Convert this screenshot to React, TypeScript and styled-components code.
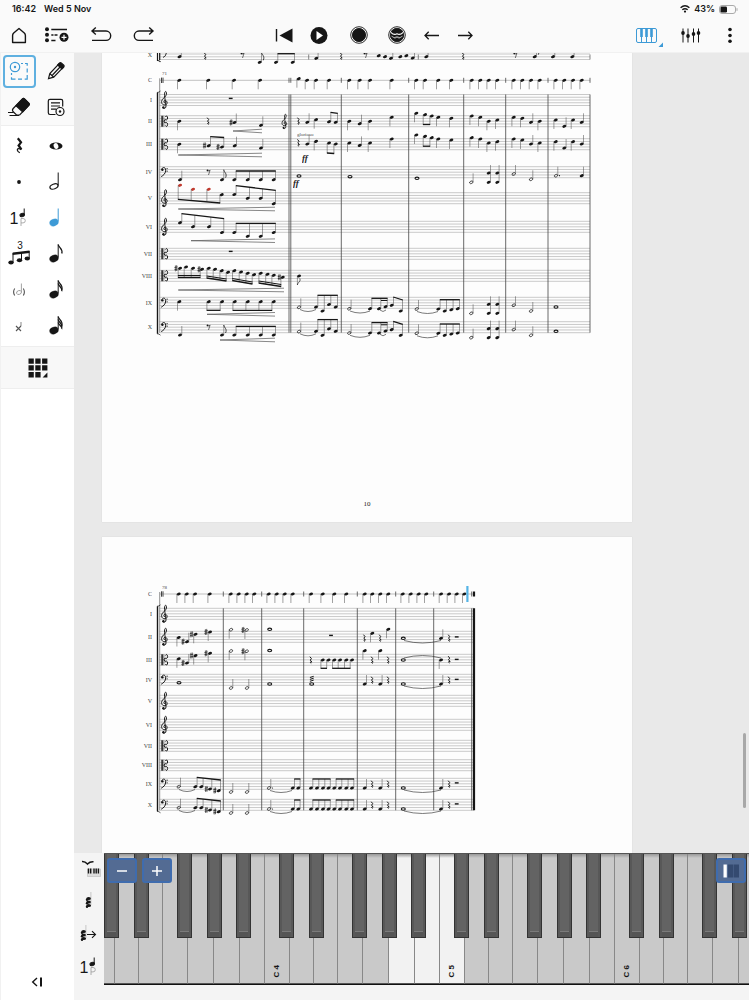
import React from "react";
import styled, { createGlobalStyle } from "styled-components";

const INK = "#161616";
const BLUE = "#3d9ad6";

const GlobalStyle = createGlobalStyle`
  * { box-sizing: border-box; }
  html, body, #root { height: 100%; }
  body { margin: 0; background: #fafafa; color: ${INK}; font-family: Inter, "Liberation Sans", sans-serif; }
  button { font: inherit; color: inherit; border: 0; padding: 0; background: none; }
`;

const Shell = styled.div`
  height: 100vh;
  display: flex;
  flex-direction: column;
  overflow: hidden;
`;

/* ---------- header ---------- */

const StatusBar = styled.div`
  height: 18px;
  flex: none;
  display: flex;
  align-items: center;
  justify-content: space-between;
  padding: 0 11px 0 12px;
  font-size: 9px;
  line-height: 16px;
  font-weight: 600;
`;

const StatusGroup = styled.div<{ $gap: number }>`
  display: flex;
  align-items: center;
  gap: ${(p) => p.$gap}px;
`;

const Toolbar = styled.header`
  height: 35px;
  flex: none;
  display: grid;
  grid-template-columns: 1fr auto 1fr;
  align-items: center;
  border-bottom: 1px solid #f1f1f1;
`;

const ToolGroup = styled.div<{ $gap: number; $end?: boolean }>`
  display: flex;
  align-items: center;
  gap: ${(p) => p.$gap}px;
  ${(p) => (p.$end ? "justify-content: flex-end; padding-right: 9px;" : "")}
`;

const LeftTools = styled(ToolGroup)`
  padding-left: 4px;
`;

const IconButton = styled.button<{ $w?: number }>`
  width: ${(p) => p.$w ?? 30}px;
  height: 30px;
  display: flex;
  align-items: center;
  justify-content: center;
  svg { flex: none; display: block; overflow: visible; }
`;

/* ---------- body ---------- */

const Body = styled.div`
  flex: 1;
  min-height: 0;
  display: flex;
`;

const Sidebar = styled.aside`
  width: 74px;
  flex: none;
  display: flex;
  flex-direction: column;
  background: #fff;
  border-left: 1px solid #f1f1f1;
`;

const Palette = styled.div<{ $tinted?: boolean }>`
  display: grid;
  grid-template-columns: 1fr 1fr;
  grid-auto-rows: 36px;
  justify-items: center;
  align-items: center;
  padding: ${(p) => (p.$tinted ? "0" : "2px 0")};
  background: ${(p) => (p.$tinted ? "#fafafa" : "#fff")};
  border-bottom: 1px solid #eee;
`;

const PaletteButton = styled.button<{ $active?: boolean }>`
  width: 33px;
  height: 33px;
  display: flex;
  align-items: center;
  justify-content: center;
  border-radius: 4px;
  border: 2px solid ${(p) => (p.$active ? "#5fb0e0" : "transparent")};
  svg { flex: none; display: block; overflow: visible; }
`;

const GridRow = styled.div`
  height: 42px;
  display: flex;
  align-items: center;
  justify-content: center;
  background: #f8f8f8;
  border-bottom: 1px solid #eee;
`;

const SidebarFoot = styled.div`
  margin-top: auto;
  height: 33px;
  display: flex;
  justify-content: center;
`;

const Main = styled.main`
  flex: 1;
  min-width: 0;
  display: flex;
  flex-direction: column;
`;

const ScoreView = styled.section`
  position: relative;
  flex: 1;
  min-height: 0;
  overflow: hidden;
  display: flex;
  flex-direction: column;
  gap: 15px;
  padding-left: 28px;
  background: #e9e9e9;
`;

const Sheet = styled.article`
  flex: none;
  width: 100%;
  max-width: 530px;
  background: #fdfdfd;
  box-shadow: 0 0 1px #ccc;
  svg { display: block; width: 100%; height: auto; }
`;

const Folio = styled.p`
  margin: 0;
  padding-bottom: 13px;
  text-align: center;
  font: 7px/10px "Liberation Serif", serif;
  color: #222;
`;

const ScrollThumb = styled.div`
  position: absolute;
  right: 3px;
  bottom: 45px;
  width: 3px;
  height: 75px;
  border-radius: 2px;
  background: #a8a8a8;
`;

/* ---------- keyboard ---------- */

const PianoPanel = styled.section`
  flex: none;
  height: 147px;
  display: flex;
  background: #f4f4f4;
`;

const PianoTools = styled.div`
  width: 30px;
  flex: none;
  display: flex;
  flex-direction: column;
  gap: 3px;
`;

const KeyboardFrame = styled.div`
  position: relative;
  flex: 1;
  min-width: 0;
  height: 132px;
  overflow: hidden;
  display: flex;
  border-top: 1px solid #555;
  border-bottom: 1px solid #111;
`;

const Octave = styled.div`
  position: relative;
  flex: none;
  display: grid;
  grid-template-columns: 25px 24px 24px 25px 26px 26px 25px;
  &:first-child { margin-left: -14px; }
`;

const WhiteKey = styled.button<{ $lit: boolean }>`
  display: flex;
  align-items: flex-end;
  justify-content: center;
  padding-bottom: 6px;
  background: linear-gradient(#999, ${(p) => (p.$lit ? "#f2f2f2" : "#c9c9c9")} 4px);
  border-right: 1px solid #888;
  border-bottom: 1px solid #555;
  font: bold 8px/10px "Liberation Sans", sans-serif;
`;

const KeyName = styled.span`
  writing-mode: vertical-rl;
  transform: rotate(180deg);
`;

const BlackKey = styled.button<{ $x: number }>`
  position: absolute;
  top: 0;
  left: ${(p) => p.$x}px;
  width: 15px;
  height: 84px;
  background: #636363;
  border: 1px solid #333;
  border-top: 0;
  box-shadow: inset 2px 0 #585858, inset -2px 0 #585858, inset 0 -5px #555, inset 0 -6px #7b7b7b;
`;

const OverlayButton = styled.button<{ $side: "left" | "right"; $offset: number }>`
  position: absolute;
  top: 4px;
  ${(p) => p.$side}: ${(p) => p.$offset}px;
  width: 30px;
  height: 25px;
  display: flex;
  align-items: center;
  justify-content: center;
  border-radius: 3px;
  border: 2px solid #3f6cae;
  background: #536b93;
`;

/* ---------- music notation ---------- */

function Treble({ x, y, s = 1 }: { x: number; y: number; s?: number }) {
  return (
    <g transform={`translate(${x} ${y}) scale(${s})`}>
      <path d="M.9 3C-.9 3-1.2.9.4.5C3 .2 3.6 4.6.6 5C-3.6 5.2-3.8.6-1.2-1.6C.8-3.4 2.4-5 1.9-7.4C1.6-9.4.3-8.4.1-6.8C-.3-4.8 1 2 1.5 5.8C1.9 8.4-.8 9-1.8 7.8" fill="none" stroke={INK} strokeWidth="1" />
      <circle cx="-1.1" cy="7.4" r="1.2" fill={INK} />
    </g>
  );
}

function Alto({ x, y }: { x: number; y: number }) {
  return (
    <g transform={`translate(${x} ${y})`} fill="none" stroke={INK}>
      <path d="M-2.4-5.5V5.5" strokeWidth="1.5" />
      <path d="M-.7-5.5V5.5" strokeWidth=".5" />
      <path d="M.7-4.2C1.6-5.8 3.2-5.4 3.1-3.2C3-.9 1.2-1 .5-1.8L-.5 0L.5 1.8C1.2 1 3 .9 3.1 3.2C3.2 5.4 1.6 5.8.7 4.2" strokeWidth="1" />
    </g>
  );
}

function Bass({ x, y }: { x: number; y: number }) {
  return (
    <g transform={`translate(${x} ${y})`} fill={INK}>
      <path d="M-2.2-2.4C-2.2-5.4 1.7-5.6 1.7-2C1.7 1.4-.8 3.4-2.8 4.4" fill="none" stroke={INK} strokeWidth="1" />
      <circle cx="-1.6" cy="-2.4" r="1.2" />
      <circle cx="3.1" cy="-3.6" r=".6" />
      <circle cx="3.1" cy="-1" r=".6" />
    </g>
  );
}

const HEAD = { rx: 2.1, ry: 1.4 };
const UP = 10;

function Head({ x, y, fill = INK }: { x: number; y: number; fill?: string }) {
  return <ellipse cx={x} cy={y} {...HEAD} fill={fill} transform={`rotate(-22 ${x} ${y})`} />;
}

/*
 * A staff is written as space separated tokens: a letter and comma separated numbers.
 * u/d quarter, stem up or down   h/H half, stem up or down   w whole   n bare head
 * f/F flagged eighth up or down  r/e/b quarter, eighth, bar rest   s sharp   k dot   c chord
 * M/D single or double beam (beam y1, y2, then heads)   R red heads on a beam
 * T tie (x1, x2, y, bow)   P hairpin (x1, x2, y)   z tremolo   | bar tick (x, y)
 */
function Mark({ token }: { token: string }) {
  const kind = token[0];
  const v = token.slice(1).split(",").map(Number);
  const [x, y] = v;
  const stem = (sx: number, a: number, b: number) => (
    <path d={`M${sx} ${a}V${b}`} stroke="#444" strokeWidth=".5" fill="none" />
  );
  switch (kind) {
    case "u":
      return <g><Head x={x} y={y} />{stem(x + 1.8, y, y - 9)}</g>;
    case "d":
      return <g><Head x={x} y={y} />{stem(x - 1.8, y, y + 9)}</g>;
    case "n":
      return <Head x={x} y={y} />;
    case "h":
    case "H":
      return (
        <g>
          <ellipse cx={x} cy={y} rx="1.8" ry="1.2" fill="none" stroke={INK} strokeWidth=".7" transform={`rotate(-25 ${x} ${y})`} />
          {kind === "h" ? stem(x + 1.8, y, y - 9) : stem(x - 1.8, y, y + 9)}
        </g>
      );
    case "w":
      return <ellipse cx={x} cy={y} rx="2" ry="1.2" fill="none" stroke={INK} strokeWidth="1.1" />;
    case "f":
      return (
        <g><Head x={x} y={y} />{stem(x + 1.8, y, y - UP)}
          <path d={`M${x + 1.8} ${y - UP}c.3 3 3.6 3.4 1.8 8`} fill="none" stroke={INK} strokeWidth=".8" /></g>
      );
    case "F":
      return (
        <g><Head x={x} y={y} />{stem(x - 1.6, y, y + 9)}
          <path d={`M${x - 1.6} ${y + 9}c.3-3 3.6-3 2.4-6.5`} fill="none" stroke={INK} strokeWidth=".7" /></g>
      );
    case "r":
      return <path d={`M${x - 0.8} ${y - 3.3}l1.5 1.9-1.1 1.5 1.5 2c-1.6-.6-2 .5-.6 1.4`} fill="none" stroke={INK} strokeWidth="1" />;
    case "e":
      return (
        <g><circle cx={x - 1} cy={y - 1.6} r=".9" fill={INK} />
          <path d={`M${x - 1} ${y - 1.2}q2 .4 2.6-.8l-1.6 5`} fill="none" stroke={INK} strokeWidth=".6" /></g>
      );
    case "b":
      return <rect x={x - 1.9} y={y - 0.8} width="3.8" height="1.4" fill={INK} />;
    case "s":
      return <path d={`M${x - 0.6} ${y - 2.8}v5.8M${x + 0.7} ${y - 3.1}v5.8M${x - 1.6} ${y - 0.7}l3.3-.7M${x - 1.6} ${y + 1.4}l3.3-.7`} fill="none" stroke={INK} strokeWidth=".65" />;
    case "k":
      return <circle cx={x} cy={y} r=".6" fill={INK} />;
    case "c":
      return <g><Head x={x} y={y} /><Head x={x} y={v[2]} />{stem(x + 1.8, Math.max(y, v[2]), Math.min(y, v[2]) - 8)}</g>;
    case "z":
      return <path d={`M${x - 1.8} ${y}l3.8-1.2M${x - 1.8} ${y + 1.9}l3.8-1.2M${x - 1.8} ${y + 3.8}l3.8-1.2`} stroke={INK} strokeWidth="1" />;
    case "T":
      return <path d={`M${v[0]} ${v[2]}q${(v[1] - v[0]) / 2} ${v[3] * 2} ${v[1] - v[0]} 0`} fill="none" stroke="#333" strokeWidth=".65" />;
    case "P":
      return <path d={`M${v[1]} ${v[2] - 1.8}L${v[0]} ${v[2]}L${v[1]} ${v[2] + 1.8}`} fill="none" stroke="#555" strokeWidth=".7" />;
    case "|":
      return <path d={`M${x} ${y - 2.5}v5`} stroke="#555" strokeWidth=".7" />;
    case "M":
    case "D":
    case "R": {
      const [b1, b2, ...pts] = v;
      const heads: [number, number][] = [];
      for (let i = 0; i < pts.length; i += 2) heads.push([pts[i], pts[i + 1]]);
      const up = b1 < heads[0][1];
      const off = up ? 1.8 : -1.8;
      const x1 = heads[0][0] + off;
      const x2 = heads[heads.length - 1][0] + off;
      const at = (px: number) => b1 + ((b2 - b1) * (px - x1)) / (x2 - x1);
      return (
        <g>
          {heads.map(([hx, hy], i) => (
            <g key={i}>
              <Head x={hx} y={hy} fill={kind === "R" && i < 3 ? "#c23a2e" : INK} />
              {stem(hx + off, hy, at(hx + off))}
            </g>
          ))}
          <path d={`M${x1 - 0.3} ${b1}L${x2 + 0.3} ${b2}`} stroke={INK} strokeWidth="1.3" />
          {kind === "D" && <path d={`M${x1 - 0.3} ${b1 - 2}L${x2 + 0.3} ${b2 - 2}`} stroke={INK} strokeWidth="1.2" />}
        </g>
      );
    }
    default:
      return null;
  }
}

function Marks({ text, dy = 0 }: { text: string; dy?: number }) {
  return (
    <g transform={`translate(0 ${dy})`}>
      {text.trim().split(/\s+/).map((t, i) => <Mark key={i} token={t} />)}
    </g>
  );
}

type Clef = "treble" | "alto" | "bass";
type StaffDef = { name: string; top: number; clef: Clef };

const NAMES = ["I", "II", "III", "IV", "V", "VI", "VII", "VIII", "IX", "X"];
const staves = (tops: number[], clefs: string): StaffDef[] =>
  tops.map((top, i) => ({
    name: NAMES[i],
    top,
    clef: clefs[i] === "t" ? "treble" : clefs[i] === "a" ? "alto" : "bass",
  }));

const StaffText = styled.text<{ $size?: number }>`
  font: ${(p) => p.$size ?? 6}px "Liberation Serif", serif;
  fill: #222;
  opacity: 0.85;
`;

const Dynamic = styled.text`
  font: italic bold 9px "Liberation Serif", serif;
  fill: ${INK};
  opacity: 0.95;
`;

function System({ defs, right, bars, cue, cueBar }: { defs: StaffDef[]; right: number; bars: number[]; cue: number; cueBar: string }) {
  const top = defs[0].top;
  const bottom = defs[defs.length - 1].top + 11;
  return (
    <g>
      <path d={`M160 ${cue}H${right}`} stroke="#999" strokeWidth=".6" />
      <path d={`M161.5 ${cue - 2.7}v5.4M163 ${cue - 2.7}v5.4`} stroke="#444" strokeWidth="1" />
      <StaffText x="152" y={cue + 2} textAnchor="end">C</StaffText>
      <StaffText x="162" y={cue - 5} $size={5}>{cueBar}</StaffText>
      {defs.map((d) => {
        const mid = d.top + 5.5;
        return (
          <g key={d.name}>
            {[0, 1, 2, 3, 4].map((i) => (
              <path key={i} d={`M159.5 ${d.top + i * 2.75}H${right}`} stroke="#a6a6a6" strokeWidth=".6" />
            ))}
            <StaffText x="152" y={mid + 2} textAnchor="end">{d.name}</StaffText>
            {d.clef === "treble" && <Treble x={164.5} y={mid} />}
            {d.clef === "alto" && <Alto x={164.5} y={mid} />}
            {d.clef === "bass" && <Bass x={164} y={mid} />}
          </g>
        );
      })}
      <path d={`M159.7 ${cue - 2}V${bottom}`} stroke="#666" strokeWidth=".7" />
      <path d={`M157.5 ${top - 2}V${bottom + 1}`} stroke={INK} strokeWidth="1.4" />
      <path d={`M157 ${top - 2}q2 0 3.5-1.5M157 ${bottom + 1}q2 0 3.5 1.5`} stroke={INK} strokeWidth=".7" fill="none" />
      {bars.map((b) => (
        <path key={b} d={`M${b} ${top}V${bottom}M${b} ${cue - 2.5}v5`} stroke="#444" strokeWidth=".8" />
      ))}
    </g>
  );
}

const quarters = (xs: number[], y: number) => xs.map((x) => `d${x},${y}`).join(" ");

const PAGE_A = staves([94.5, 115.7, 138.7, 166.7, 192.7, 221.3, 248.3, 270.3, 297.3, 321.7], "taabttaabb");
const PAGE_B = staves([608.3, 631.3, 654.3, 674.3, 695.3, 719.3, 740.3, 759.7, 778.3, 799.3], "ttabttaabb");

const TOP_LINE = `u179.5,56.7 r205,56 e242.5,55 f259.7,62.3 M53.7,53.7,276,62.3,292.7,62.3 u316.3,58.3 r341,56 e365.5,55
 n378.7,55.7 n385,56.7 u391,58.3 n400.3,56.7 n406.3,55.7 u412.7,58 u426.3,56.7 r463,56 e515.3,55 f534.7,56.7 u553,56.7 u572.3,56.7
 |308.7,57 |418.3,57 |590,57`;

const MELODY = `r298.3,121 u307.3,122.3 d316,119.7 d349.3,121.3 u359.7,123.7 d370,121.3 d391.7,117.3
 d416.3,113.3 M124.5,124.5,425,114.7,431.7,116 d438.3,117.3 d451.3,118.3 d471.7,116 d480.3,117.3 d488.7,121.3 d497.3,120
 d513.7,117.3 d522.3,118.3 u531,122.3 d539.7,121.3 d555.7,120 u564.3,126.3 d573,120 u581.7,122.3`;

const LOW_A = `h299,307.3 T300,316,309.5,2 M295.3,295.3,316,307,322.5,311,329,304.5,335.7,307
 h349.3,308.7 T350,370,311,2 M298.3,298.3,370,308.7,379,308.7,385.5,306.7 T380,386,310,1.5 M297,300,391.7,305.3,400.7,311
 h416.7,309 T417,438,311.5,2 M299.7,299.7,438.3,309,444.7,311,451.3,309.7,457.7,308.7
 h471.3,313.3 c488.7,304.3,313.3 c497.3,304.3,313.3 h513.7,305.3 h531,311 w556,307`;

const PARTS_A = `b230.7,98.5
 d179.3,121.3 r208,121 s231,122.5 u234.5,122.5 u261,125.3 P233,262,131 M112.3,113.3,329,121.7,335.7,122.3
 d179.3,144.3 s204.5,145.5 M136.7,137.5,208.7,145.7,222,147 s218,147 u234.7,145.7 u261,148 P178.3,262,155 M153,153.5,329,143,335.7,144
 u180,179.7 e208.5,172 f222,179.7 M171,171,234.3,179.7,247.7,179.7,260.7,179.7,273.7,179.7 w299,176 w350,176.7 w417,178.3
 h471.3,182.3 c488.7,173,182.3 c497.3,173,182.3 h513.7,174 h531,179.3 h556,175.7 k559.5,175.7 u581.7,175.7
 R199.3,203,180,185.3,193,189.3,208.7,189.3,221.7,194.7 M185.7,190.3,234.3,194.5,247.7,198.3,260.7,198.3,273.7,203.7 P178.3,275,209
 M213.7,218.7,180,222.7,193,226.7,209,226.7,222,232.5 M223.3,223.3,234.3,232.5,247.7,236.3,260.7,236.3,273.7,232.5 P191,275,240.7
 b230.7,251.5
 s176,268.3 D277.5,277.5,180,268.3,186,267,193,268.3,202,269.3 s199,269.3 D278,281,208.7,268.3,215,269.3,221.7,270.7,228,272.3
 D280.5,284,234.3,270.7,241,272,247.7,273.3,254,274.7 D283,286.5,260.7,273.3,267.5,274.3,273.7,275.3,282.7,277.3 s279.3,277.3 P178.3,284,290 F299,276
 d179.3,301.7 M310.3,310.3,208.7,301.7,222,301.7 M310.3,310.3,234.7,301.7,247.7,301.7,260.7,301.7,273.7,301.7 P207,275,314.3
 u180,335 e208.5,327 f222,335 M326.3,326.3,234.3,335,247.7,335,260.7,335,273.7,335 P220,275,340`;

const LEAD_B = `d178.7,637.5 s183,641.7 u187,641.7 s191.5,634.3 d195.5,634.3 s206,632 d210,632 H231,629.7 s243,630 H246.7,630 w269.7,629.3`;

const LOW_B = `h178.7,786.7 T179,195,789.5,2 M777.3,780,195.3,786.7,201.3,786.7,210,789,218.7,790.7 s206.3,789 s214.8,790.5
 h231,792 h247,792 h269,788 k272.5,788 T270,292,790.5,2 M779,779,292.7,788,298.3,788
 M779,779,311,788,317,788,323,788,328.5,788 M779,779,334.3,788,340,788,346.3,788,352,788
 u364.7,788 r372,784 u380.3,788 r388,784 w403.3,788 T404,441,790,2.5 u441,788 r449,784 b456.7,783`;

const PARTS_B = `b331,635.5 r364.3,638 d372.3,633.3 r380,638 d388.3,629.3 w403.3,638.3 T404,441,640.5,2.5 u441,638.3 r449,638 b456.7,637
 r310.7,660 M668.3,668.3,322.7,660,328.5,660 M668.3,668.3,334.3,660,340,660,346.3,660,352,660 d364.7,650.7 r372,660 d380.3,650.7 r388,660
 w403.3,660 T404,441,658,-2.5 d441,660 r449,659.5 b456.7,659.5
 w179,682.7 h231,688 h247,688 w269.7,684 w311.7,684 z311.7,677.5 u364.7,684 r372,680 u380.3,684 r388,680 w403.3,684 T404,441,686,2.5 u441,684 r449,680 b456.7,679.5`;

const A_CUES = [179.3, 208.3, 234, 260, 307, 316, 329, 349.3, 359.7, 370, 391.7, 416.3, 425, 438.3, 451.3, 471.7, 480.3, 488.7, 497.3, 513.7, 522.3, 531, 539.7, 555.7, 564.3, 573, 581.7];
const B_CUES = [178.7, 186.7, 195, 209.7, 230.7, 238.7, 246.7, 254.3, 268.7, 276.7, 284.7, 292.7, 311, 322.7, 334.3, 346.3, 364.7, 372.3, 380.3, 388.3, 402.7, 410.7, 418.7, 426.3, 441, 449, 456.7, 464.3];

function FirstPage() {
  return (
    <svg viewBox="102 53 530 446" role="img" aria-label="Score, page 10">
      {[54, 56.8, 59.5].map((y) => <path key={y} d={`M160 ${y}H590`} stroke="#a6a6a6" strokeWidth=".6" />)}
      <StaffText x="152" y="57" textAnchor="end">X</StaffText>
      <path d="M157.5 53V60.5q2 0 3 1.5M159.7 53V60" stroke={INK} strokeWidth="1.2" fill="none" />
      <path d="M163 57.5q3-1 3.5-5" stroke={INK} strokeWidth=".9" fill="none" />
      <Marks text={TOP_LINE} />
      <System defs={PAGE_A} right={590} bars={[289, 290.8, 341.3, 408.7, 463.7, 505.7, 548, 590]} cue={80.3} cueBar="71" />
      <Marks text={quarters(A_CUES, 80.3) + " d298.7,78.7"} />
      <Marks text={MELODY} />
      <Marks text={MELODY} dy={21.7} />
      <Marks text={PARTS_A} />
      <Marks text={LOW_A} />
      <Marks text={LOW_A} dy={24.3} />
      <path d="M381 300.5H387.3M381 324.8H387.3" stroke={INK} strokeWidth="1" />
      <Treble x={284.5} y={121.5} s={0.85} />
      <StaffText x="297" y="136" $size={5}>glorioso</StaffText>
      <Dynamic x="302" y="161">ff</Dynamic>
      <Dynamic x="293" y="186">ff</Dynamic>
    </svg>
  );
}

function SecondPage() {
  return (
    <svg viewBox="102 537 530 700" role="img" aria-label="Score, page 11">
      <System defs={PAGE_B} right={474} bars={[223.3, 261.7, 303.7, 357.3, 395.7, 433.7, 471.7]} cue={594} cueBar="78" />
      <path d="M474 608.3V810.3M474 591.5v5" stroke={INK} strokeWidth="2.2" />
      <Marks text={quarters(B_CUES, 594)} />
      <Marks text={LEAD_B} />
      <Marks text={LEAD_B} dy={21.3} />
      <Marks text={PARTS_B} />
      <Marks text={LOW_B} />
      <Marks text={LOW_B} dy={21} />
      <rect x="466.3" y="586" width="2.2" height="16" fill="#55b4e6" />
    </svg>
  );
}

/* ---------- icons ---------- */

const Icon = ({ w = 24, h = 24, children, color = INK, sw = 1.4 }: { w?: number; h?: number; children: React.ReactNode; color?: string; sw?: number }) => (
  <svg width={w} height={h} viewBox={`0 0 ${w} ${h}`} fill="none" stroke={color} strokeWidth={sw} aria-hidden="true">{children}</svg>
);

function SideNote({ color = INK, hollow, flags = 0 }: { color?: string; hollow?: boolean; flags?: number }) {
  return (
    <Icon color={color} sw={1}>
      <ellipse cx="10" cy="16.5" rx={hollow ? 4.2 : 4.5} ry={hollow ? 2.4 : 3.4} fill={hollow ? "none" : color} strokeWidth={hollow ? 1.3 : 0.3} transform="rotate(-20 10 16.5)" />
      <path d="M14.2 15.5V2.5" />
      {Array.from({ length: flags }, (_, i) => (
        <path key={i} d={`M14.2 ${2.5 + i * 3}c.4 3.2 5 4 3.6 ${9 - i * 1.2}`} strokeWidth="1.3" />
      ))}
    </Icon>
  );
}

const OneP = () => (
  <Icon sw={1}>
    <text x="2.5" y="17.5" fontSize="16" fontFamily="Liberation Sans, sans-serif" fill={INK} stroke="none">1</text>
    <ellipse cx="15.2" cy="9" rx="2.3" ry="1.7" fill={INK} transform="rotate(-20 15.2 9)" />
    <path d="M17.2 9V2.5" />
    <path d="M14 20V12.5H16q2.3 0 2.3 2.2t-2.3 2.2H14" stroke="#999" strokeWidth=".8" />
  </Icon>
);

const Clip = () => (
  <g fill={INK} stroke="none">
    <ellipse cx="11.7" cy="9.5" rx="2.4" ry="1.6" /><ellipse cx="11.7" cy="13" rx="2.4" ry="1.6" /><ellipse cx="11.7" cy="16.5" rx="2.4" ry="1.6" />
    <circle cx="10" cy="10.8" r="1.2" /><circle cx="10" cy="14.3" r="1.2" /><circle cx="10" cy="17.8" r="1.2" />
    <path d="M13.7 3h.5v13h-.5z" fill="#999" />
  </g>
);

const RecordIcon = () => (
  <Icon sw={0.9}><circle cx="12" cy="12" r="8.3" /><circle cx="12" cy="12" r="6.6" fill={INK} /></Icon>
);

const BLACKS = [14, 44, 87, 117, 146];
const WHITES = ["C", "D", "E", "F", "G", "A", "B"];
const LIT = new Set(["A4", "B4", "C5"]);
const NAMED = new Set([4, 5, 6]);

function Keyboard() {
  return (
    <KeyboardFrame>
      {[3, 4, 5, 6, 7, 8, 9].map((o) => (
        <Octave key={o}>
          {WHITES.map((n) => (
            <WhiteKey key={n} $lit={LIT.has(n + o)} aria-label={`${n}${o}`}>
              {n === "C" && NAMED.has(o) && <KeyName>{`C ${o}`}</KeyName>}
            </WhiteKey>
          ))}
          {BLACKS.map((x) => <BlackKey key={x} $x={x} aria-label="Black key" />)}
        </Octave>
      ))}
      <OverlayButton $side="left" $offset={3} aria-label="Zoom out">
        <Icon w={12} h={12} color="#fff" sw={1.5}><path d="M1 6H11" /></Icon>
      </OverlayButton>
      <OverlayButton $side="left" $offset={38} aria-label="Zoom in">
        <Icon w={12} h={12} color="#fff" sw={1.5}><path d="M1 6H11M6 1V11" /></Icon>
      </OverlayButton>
      <OverlayButton $side="right" $offset={3} aria-label="Key size">
        <Icon w={18} h={14}><path d="M1.5.5H4.8V13.5H1.5z" fill="#fff" stroke="none" /><path d="M6 .5H11.500V13.500H6zM12 .5H17V13.500H12z" fill="#344a70" stroke="none" /></Icon>
      </OverlayButton>
    </KeyboardFrame>
  );
}

export default function App() {
  return (
    <Shell>
      <GlobalStyle />
      <StatusBar>
        <StatusGroup $gap={8}><span>16:42</span><span>Wed 5 Nov</span></StatusGroup>
        <StatusGroup $gap={4}>
          <Icon w={10} h={8} sw={1.4}><path d="M.6 2.8Q5-1.2 9.4 2.8M2.3 4.8Q5 2.6 7.7 4.8" /><circle cx="5" cy="6.6" r="1.1" fill={INK} stroke="none" /></Icon>
          <span>43%</span>
          <Icon w={19} h={9}><rect x=".5" y=".5" width="16" height="8" rx="2.5" stroke="#aaa" strokeWidth="1" /><rect x="1.5" y="1.5" width="6.5" height="6" rx="1.2" fill={INK} stroke="none" /><path d="M18 3.2v2.6" stroke="#aaa" strokeWidth="1" /></Icon>
        </StatusGroup>
      </StatusBar>

      <Toolbar>
        <LeftTools $gap={14}>
          <ToolGroup $gap={8}>
            <IconButton aria-label="Home"><Icon><path d="M12 5.500L17.3 10Q18.4 11 18.4 12.500V19.500H5.6V12.500Q5.6 11 6.700 10Z" strokeLinejoin="round" /></Icon></IconButton>
            <IconButton aria-label="Add to list">
              <Icon w={30}>
                <g fill={INK} stroke="none"><circle cx="5" cy="6.3" r="2" /><circle cx="5" cy="11.8" r="2" /><circle cx="5" cy="17.3" r="2" /><circle cx="22" cy="14.3" r="4.5" /></g>
                <path d="M9.3 6.5H25M9.3 12h2.2M12.5 12h3M9.3 17.5h4.2" />
                <path d="M19.5 14.3h5M22 11.8v5" stroke="#fff" strokeWidth="1.2" />
              </Icon>
            </IconButton>
          </ToolGroup>
          <ToolGroup $gap={13}>
            <IconButton aria-label="Undo"><Icon w={30}><path d="M6 8H20a4.700 4.700 0 0 1 0 9.400H6M9.800 4.600L6 8l3.800 3.400" /></Icon></IconButton>
            <IconButton aria-label="Redo"><Icon w={30}><path d="M24 8H10a4.700 4.700 0 0 0 0 9.400H24M20.200 4.600L24 8l-3.800 3.400" /></Icon></IconButton>
          </ToolGroup>
        </LeftTools>
        <ToolGroup $gap={10}>
          <IconButton $w={20} aria-label="Back to start"><Icon><path d="M4.5 6V18.500" /><path d="M20.500 5.500V19.500L7.500 12.500Z" fill={INK} stroke="none" /></Icon></IconButton>
          <IconButton aria-label="Play"><Icon><circle cx="12" cy="12.500" r="8.500" fill={INK} stroke="none" /><path d="M9.5 8V17L16 12.500Z" fill="#fff" stroke="none" /></Icon></IconButton>
          <IconButton aria-label="Record"><RecordIcon /></IconButton>
          <IconButton $w={26} aria-label="Video">
            <Icon sw={0.9}>
              <circle cx="12" cy="12" r="8.3" /><circle cx="12" cy="12" r="6.7" fill={INK} />
              <path d="M5.800 9.300Q9 12.600 12 10.800Q15 12.600 18.200 9.300" stroke="#fff" strokeWidth="1.100" />
              <path d="M6.500 13.200Q9 15.800 12 13.800Q15 15.800 17.500 13.200" stroke="#ccc" strokeWidth=".9" />
              <path d="M9.500 15.500L12 14.200L14.500 15.500" stroke="#aaa" strokeWidth=".7" />
            </Icon>
          </IconButton>
          <IconButton $w={24} aria-label="Previous"><Icon sw={1.3}><path d="M5 12.500H19M8.700 8.800L5 12.500l3.700 3.700" /></Icon></IconButton>
          <IconButton $w={22} aria-label="Next"><Icon sw={1.3}><path d="M5 12.500H19M15.300 8.800L19 12.500l-3.700 3.700" /></Icon></IconButton>
        </ToolGroup>
        <ToolGroup $gap={14} $end>
          <IconButton aria-label="Piano keyboard">
            <Icon w={30} color={BLUE} sw={1}>
              <rect x="4.500" y="5.500" width="20" height="14" rx="1.500" />
              <path d="M9.500 5.500V19.500M14.500 5.500V19.500M19.500 5.500V19.500" strokeWidth="1" />
              <path d="M9.500 5.500V14M14.500 5.500V14M19.500 5.500V14" strokeWidth="2.600" />
              <path d="M31 19.500V24H26.500Z" fill={BLUE} stroke="none" />
            </Icon>
          </IconButton>
          <IconButton aria-label="Mixer">
            <Icon w={30} sw={1}>
              <path d="M7 5.500V19.500M12 5.500V19.500M17.500 5.500V19.500M22.500 5.500V19.500" />
              <g fill={INK} stroke="none"><ellipse cx="7" cy="10" rx="1.800" ry="2" /><ellipse cx="12" cy="13" rx="1.800" ry="2" /><ellipse cx="17.500" cy="11" rx="1.800" ry="2" /><ellipse cx="22.500" cy="10" rx="1.800" ry="2" /></g>
            </Icon>
          </IconButton>
          <IconButton $w={20} aria-label="More"><Icon w={6}><g fill={INK} stroke="none"><circle cx="3" cy="6.500" r="1.800" /><circle cx="3" cy="12.500" r="1.800" /><circle cx="3" cy="18.300" r="1.800" /></g></Icon></IconButton>
        </ToolGroup>
      </Toolbar>

      <Body>
        <Sidebar>
          <Palette $tinted>
            <PaletteButton $active aria-label="Select">
              <Icon color={BLUE} sw={1.2}>
                <circle cx="8" cy="8" r="4.7" /><circle cx="8" cy="8" r="1.200" fill={BLUE} stroke="none" />
                <path d="M14 4.500h2M18 4.500h2.200v2.300M20.200 9.500v4M20.200 16v4.200h-2.500M15 20.200h-4M8.500 20.200H4.500v-2M4.500 16v-2" />
              </Icon>
            </PaletteButton>
            <PaletteButton aria-label="Pencil">
              <Icon sw={1.2}>
                <path d="M4.500 19.700L5.800 14.500L15.200 4.700L19.200 8.300L9.700 18.200ZM5.800 14.500L9.700 18.200M8.500 16L17 7" />
                <path d="M13.700 6L15.600 4Q16.500 3.200 17.500 4.100L19.800 6.200Q20.600 7 19.800 8L17.900 10Z" fill={INK} />
              </Icon>
            </PaletteButton>
            <PaletteButton aria-label="Eraser">
              <Icon sw={1.2}>
                <path d="M6.200 13.500L15.500 4Q16.500 3 17.500 4L22 8.300Q22.800 9.200 22 10.200L12.700 20H9.500L6.200 16.800Q4.700 15 6.200 13.500Z" />
                <path d="M9 10.700L15.500 4Q16.500 3 17.500 4L22 8.300Q22.800 9.200 22 10.200L15.700 16.900Z" fill={INK} />
                <path d="M1 17.500H6.500M2.500 20.500H12" />
              </Icon>
            </PaletteButton>
            <PaletteButton aria-label="Notes">
              <Icon sw={1.2}>
                <path d="M11.500 19.500H6Q4.300 19.500 4.300 17.800V6Q4.300 4.300 6 4.300H17Q18.700 4.300 18.700 6V11.500M7 7.800H16M7 11H16M7 14.200H12" />
                <circle cx="16" cy="16.500" r="4" /><circle cx="16" cy="16.500" r="1.200" fill={INK} stroke="none" />
              </Icon>
            </PaletteButton>
          </Palette>
          <Palette>
            <PaletteButton aria-label="Rest"><Icon><path d="M10.800 4.300L14 8.300L11.600 11.500L14.400 15.500" strokeWidth="2.200" /><path d="M14.400 15.500Q10.500 13.600 10.300 16Q10.500 17.500 12.800 18.800" strokeWidth="1.300" /></Icon></PaletteButton>
            <PaletteButton aria-label="Whole note"><Icon><ellipse cx="12" cy="12" rx="6.500" ry="3.600" fill={INK} stroke="none" /><ellipse cx="12" cy="12" rx="2.300" ry="3" fill="#fff" stroke="none" transform="rotate(-20 12 12)" /></Icon></PaletteButton>
            <PaletteButton aria-label="Dot"><Icon><circle cx="12" cy="12" r="1.900" fill={INK} stroke="none" /></Icon></PaletteButton>
            <PaletteButton aria-label="Half note"><SideNote hollow /></PaletteButton>
            <PaletteButton aria-label="Voice one"><OneP /></PaletteButton>
            <PaletteButton aria-label="Quarter note" aria-pressed="true"><SideNote color={BLUE} /></PaletteButton>
            <PaletteButton aria-label="Triplet">
              <Icon sw={1}>
                <text x="13" y="6.500" textAnchor="middle" fontSize="10" fontFamily="Liberation Sans, sans-serif" fill={INK} stroke="none">3</text>
                <path d="M5.700 10.500L22.500 8.500V11L5.700 13Z" fill={INK} stroke="none" />
                <path d="M6 11V20.500M14.500 11V18.500M22.200 9V16.500" />
                <g fill={INK} stroke="none"><ellipse cx="4" cy="20.500" rx="2.700" ry="2" /><ellipse cx="12.500" cy="18.300" rx="2.700" ry="2" /><ellipse cx="20.300" cy="16.500" rx="2.700" ry="2" /></g>
              </Icon>
            </PaletteButton>
            <PaletteButton aria-label="Eighth note"><SideNote flags={1} /></PaletteButton>
            <PaletteButton aria-label="Ghost note">
              <Icon color="#999" sw={0.9}>
                <ellipse cx="12" cy="14.500" rx="2.500" ry="1.900" transform="rotate(-20 12 14.500)" /><path d="M14.400 14V5.500" />
                <path d="M7.700 10.500Q5.500 14 7.700 17.500M16.300 10.500Q18.500 14 16.300 17.500" stroke="#555" strokeWidth="1.100" />
              </Icon>
            </PaletteButton>
            <PaletteButton aria-label="Sixteenth note"><SideNote flags={2} /></PaletteButton>
            <PaletteButton aria-label="Cross note"><Icon color="#555" sw={1.1}><path d="M9 12L14 17M14 12L9 17" /><path d="M14 12V8" strokeWidth=".7" /></Icon></PaletteButton>
            <PaletteButton aria-label="Thirty-second note"><SideNote flags={3} /></PaletteButton>
          </Palette>
          <GridRow>
            <IconButton aria-label="All symbols">
              <Icon w={20} h={20}><path d="M.5.5h5.300v5.300H.5zM7.300.5h5.300v5.300H7.300zM14.100.5h5.300v5.300h-5.300zM.5 7.300h5.300v5.300H.5zM7.300 7.300h5.300v5.300H7.300zM14.100 7.300h5.300v5.300h-5.300zM.5 14.100h5.300v5.300H.5zM7.300 14.100h5.300v5.300H7.300zM19.400 14.600v4.800h-4.800z" fill={INK} stroke="none" /></Icon>
            </IconButton>
          </GridRow>
          <SidebarFoot>
            <IconButton aria-label="Collapse sidebar"><Icon w={12} h={12}><path d="M5 2L.7 6L5 10" /><path d="M9 1.500V10.500" strokeWidth="2" /></Icon></IconButton>
          </SidebarFoot>
        </Sidebar>

        <Main>
          <ScoreView>
            <Sheet><FirstPage /><Folio>10</Folio></Sheet>
            <Sheet><SecondPage /></Sheet>
            <ScrollThumb />
          </ScoreView>
          <PianoPanel>
            <PianoTools>
              <IconButton aria-label="Hide keyboard">
                <Icon sw={1.2}>
                  <path d="M5 5.500Q8 5.300 10.500 8Q13 5.500 16.500 5.800" strokeWidth="1.600" />
                  <path d="M10.500 13h13v7.500h-13z" fill="#ddd" stroke="#bbb" strokeWidth=".6" />
                  <path d="M11.500 12.500v5M13.700 12.500v5M17 12.500v5M19.200 12.500v5M21.400 12.500v5" strokeWidth="1.400" />
                </Icon>
              </IconButton>
              <IconButton aria-label="Chord"><Icon><Clip /></Icon></IconButton>
              <IconButton aria-label="Chord step"><Icon sw={1.1}><g transform="translate(-5 0)"><Clip /></g><path d="M10 12.500H18.500M15 9.200L18.500 12.500L15 15.800" /></Icon></IconButton>
              <IconButton aria-label="Voice one"><OneP /></IconButton>
            </PianoTools>
            <Keyboard />
          </PianoPanel>
        </Main>
      </Body>
    </Shell>
  );
}
